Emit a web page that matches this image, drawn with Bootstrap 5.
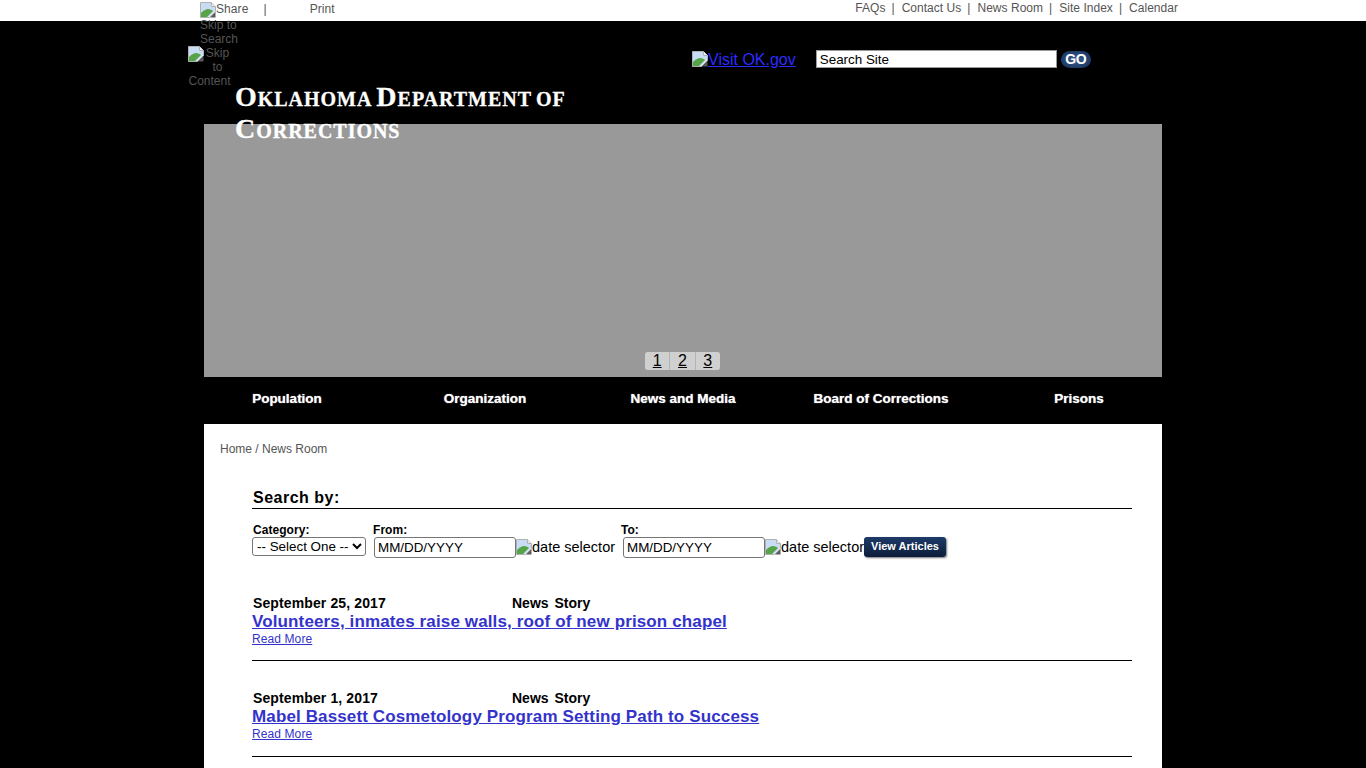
<!DOCTYPE html>
<html lang="en">
<head>
<meta charset="utf-8">
<title>Oklahoma Department of Corrections</title>
<link href="https://cdn.jsdelivr.net/npm/bootstrap@5.3.0/dist/css/bootstrap.min.css" rel="stylesheet">
<style>
html,body{height:768px;overflow:hidden}
body{background:#000;font-family:"Liberation Sans",Arial,sans-serif;color:#000;font-size:16px;line-height:normal}
a{color:inherit;text-decoration:none}
.brk{width:16px;height:16px;flex:none;display:inline-block;vertical-align:-2px}
.topbar{background:#fff;height:21px;color:#555;font-size:12px;padding:0 188px 0 200px}
.topleft{line-height:14px;width:150px;padding-top:2px;letter-spacing:.08px}
.topleft .sep{margin:0 43px 0 15px}
.topright{padding-top:1px;line-height:14px;letter-spacing:.03px}
.topright i{font-style:normal;margin:0 7px 0 6px}
.masthead{height:103px;position:relative}
.skipsearch{position:absolute;left:200px;top:-3px;width:44px;color:#555;font-size:12px;line-height:14px}
.skipcontent{position:absolute;left:188px;top:25px;width:43px;color:#555;font-size:12px;line-height:14px;text-align:center}
.skipcontent .brk{float:left;vertical-align:top}
.agency{position:absolute;left:235px;top:60px;width:345px;margin:0;color:#fff;font-family:"Liberation Serif",serif;font-variant:small-caps;font-weight:700;font-size:28px;line-height:32px;letter-spacing:.98px;word-spacing:-4px;-webkit-text-stroke:.3px #fff;z-index:2}
.searcharea{position:absolute;left:692px;top:29px}
.visit{color:#2b2bff;text-decoration:underline;font-size:16px;margin-right:20px;position:relative;top:1px}
.sitebox{width:241px;height:18px;border:1px solid #999;background:#fff;font-size:13.4px;padding:1px 3px 0;line-height:16px;color:#000}
.gobtn{width:30px;height:17px;border-radius:9px;background:radial-gradient(ellipse at center,#3d6296,#17335e 85%);color:#fff;font-size:14px;font-weight:700;margin-left:4px;text-align:center;line-height:16px;letter-spacing:-.4px}
.hero{width:958px;height:253px;background:#999;margin-left:204px;position:relative}
.pager{position:absolute;left:441px;bottom:7px;height:18px;width:75px;font-size:16px;line-height:18px;color:#000;gap:1px;background:#b4b4b4;border-radius:3px;overflow:hidden}
.pager a{text-decoration:underline;flex:1;text-align:center;background:#d0d0d0}
.mainnav{height:47px;margin-left:188px;width:990px;color:#fff;font-size:13.5px;font-weight:700;padding-bottom:5px}
.mainnav a{width:198px;text-align:center;text-shadow:0 0 1px #ccc}
.content{background:#fff;width:958px;margin-left:204px;height:400px;padding:18px 30px 0 48px}
.crumb{font-size:12px;color:#555;margin-left:-32px;line-height:14px}
.searchhead{border-bottom:1px solid #000;font-size:16px;font-weight:700;line-height:18px;margin-top:33px;height:20px;padding-left:1px;letter-spacing:.5px}
.flabels{font-size:12px;font-weight:700;line-height:14px;margin-top:14px;padding-left:1px;letter-spacing:.05px}
.flabels span{display:inline-block}
.lblcat{width:120px}
.lblfrom{width:248px}
.fctrls{height:22px}
.catsel{width:114px;height:19px;font-size:13.4px;font-family:inherit;padding:0;border:1px solid #767676;border-radius:3px;background:#fff;margin-right:8px}
.dateinp{width:142px;height:21px;font-size:13.4px;font-family:inherit;border:1px solid #767676;border-radius:3px;padding:1px 3px;color:#000;background:#fff}
.datepick{font-size:14.5px;white-space:nowrap;height:20px}
.dp1{width:107px}
.dp2{width:98px}
.viewbtn{width:82px;height:20px;background:linear-gradient(#1d3a68,#0c1d3a);color:#fff;font-size:11px;font-weight:700;border:0;border-radius:3px;text-align:center;line-height:17px;padding:0 0 2px;box-shadow:1px 1px 2px #777;margin-left:1px}
.story{border-bottom:1px solid #000;height:96px}
.first{margin-top:36px;height:66px}
.next{padding-top:29px}
.storymeta{font-size:14px;font-weight:700;line-height:17px;padding-left:1px;letter-spacing:.12px}
.storydate{width:259px}
.storytype{word-spacing:2px;letter-spacing:0}
.storylink{display:block;color:#3333cc;font-size:17px;font-weight:700;line-height:20px;text-decoration:underline;letter-spacing:.13px}
.storymore{display:block;color:#3333cc;font-size:12px;line-height:14px;text-decoration:underline;letter-spacing:.1px}
</style>
</head>
<body>
<svg width="0" height="0" class="position-absolute">
<symbol id="brk" viewBox="0 0 16 16">
<path d="M.5.5h11l4 4v5l-6 6H.5z" fill="#fff" stroke="#b0b0b0"/>
<path d="M11.5.5v4h4" fill="#eee" stroke="#b0b0b0"/>
<path d="M1 1h10v4h4v4l-6 6H1z" fill="#c9dcf5"/>
<path d="M1 15v-4c3-3 5-4 7-4 2 0 4 1 5 2l-6 6z" fill="#56a447"/>
<path d="M15.500 10v5.500H10z" fill="#5a5a5a"/>
</symbol>
</svg>

<div class="topbar d-flex justify-content-between">
  <div class="topleft d-flex text-nowrap"><svg class="brk"><use href="#brk"/></svg><span>Share</span><span class="sep">|</span><a href="#">Print</a></div>
  <div class="topright text-nowrap"><a href="#">FAQs</a><i>|</i><a href="#">Contact Us</a><i>|</i><a href="#">News Room</a><i>|</i><a href="#">Site Index</a><i>|</i><a href="#">Calendar</a></div>
</div>

<header class="masthead">
  <a class="skipsearch" href="#">Skip to Search</a>
  <a class="skipcontent" href="#"><svg class="brk"><use href="#brk"/></svg>Skip to Content</a>
  <h1 class="agency">Oklahoma Department of Corrections</h1>
  <div class="searcharea d-flex align-items-center">
    <a class="visit" href="#"><svg class="brk"><use href="#brk"/></svg>Visit OK.gov</a>
    <div class="sitebox">Search Site</div>
    <div class="gobtn">GO</div>
  </div>
</header>

<section class="hero">
  <div class="pager d-flex"><a href="#">1</a><a href="#">2</a><a href="#">3</a></div>
</section>

<nav class="mainnav d-flex align-items-center">
  <a href="#">Population</a><a href="#">Organization</a><a href="#">News and Media</a><a href="#">Board of Corrections</a><a href="#">Prisons</a>
</nav>

<main class="content">
  <div class="crumb">Home / News Room</div>
  <div class="searchhead">Search by:</div>
  <div class="flabels d-flex"><span class="lblcat">Category:</span><span class="lblfrom">From:</span><span>To:</span></div>
  <div class="fctrls d-flex align-items-start">
    <select class="catsel"><option>-- Select One --</option></select>
    <input class="dateinp" value="MM/DD/YYYY">
    <span class="datepick dp1 d-flex align-items-center"><svg class="brk"><use href="#brk"/></svg>date selector</span>
    <input class="dateinp" value="MM/DD/YYYY">
    <span class="datepick dp2 d-flex align-items-center"><svg class="brk"><use href="#brk"/></svg>date selector</span>
    <button class="viewbtn" type="button">View Articles</button>
  </div>
  <article class="story first">
    <div class="storymeta d-flex"><span class="storydate">September 25, 2017</span><span class="storytype">News Story</span></div>
    <a class="storylink" href="#">Volunteers, inmates raise walls, roof of new prison chapel</a>
    <a class="storymore" href="#">Read More</a>
  </article>
  <article class="story next">
    <div class="storymeta d-flex"><span class="storydate">September 1, 2017</span><span class="storytype">News Story</span></div>
    <a class="storylink" href="#">Mabel Bassett Cosmetology Program Setting Path to Success</a>
    <a class="storymore" href="#">Read More</a>
  </article>
</main>
<script src="https://cdn.jsdelivr.net/npm/bootstrap@5.3.0/dist/js/bootstrap.bundle.min.js"></script>
</body>
</html>
